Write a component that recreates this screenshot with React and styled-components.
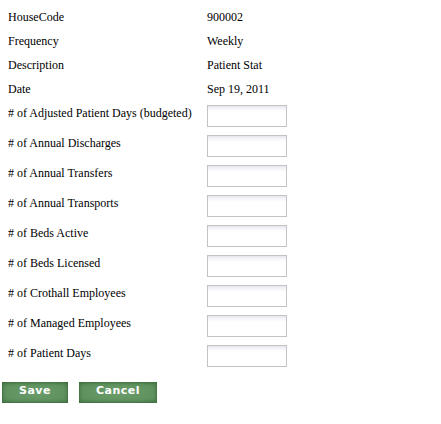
import React from "react";
import styled, { createGlobalStyle } from "styled-components";

const Global = createGlobalStyle`
  html, body { margin: 0; padding: 0; background: #ffffff; }
  body { font-family: "Liberation Serif", "Times New Roman", serif; color: #000; }
`;

const Page = styled.div`
  width: 441px;
  height: 424px;
  padding-top: 5px;
  box-sizing: border-box;
`;

const Grid = styled.div`
  display: grid;
  grid-template-columns: 199px 1fr;
  padding-left: 8px;
`;

const Cell = styled.div`
  height: ${(p) => (p.$tall ? 30 : 24)}px;
  display: flex;
  align-items: center;
  font-size: 12px;
  white-space: nowrap;
  padding-bottom: ${(p) => (p.$tall ? 5 : 0)}px;
  box-sizing: border-box;
`;

const FieldCell = styled.div`
  height: 30px;
  display: flex;
  align-items: flex-start;
  padding-top: 4px;
  box-sizing: border-box;
`;

const Input = styled.input`
  width: 80px;
  height: 22px;
  box-sizing: border-box;
  border: 1px solid #c3c3c3;
  background: linear-gradient(to bottom, #e6e6ee 0px, #f6f6fa 3px, #ffffff 6px);
  margin: 0;
  padding: 0 2px;
  outline: none;
`;

const Buttons = styled.div`
  display: flex;
  gap: 11px;
  padding-left: 2px;
  margin-top: 11px;
`;

const Button = styled.button`
  width: ${(p) => p.$w}px;
  height: 21px;
  border: none;
  margin: 0;
  padding: 0 0 3px;
  background: radial-gradient(ellipse at center, #6a9d6a 0%, #5f915f 70%, #4f7f4f 100%);
  box-shadow: inset 0 0 3px 1px #3f6d3f;
  color: #ffffff;
  font-family: "DejaVu Sans", Verdana, sans-serif;
  font-weight: bold;
  font-size: 11px;
  letter-spacing: 0.5px;
  line-height: 14px;
  cursor: pointer;
`;

const info = [
  ["HouseCode", "900002"],
  ["Frequency", "Weekly"],
  ["Description", "Patient Stat"],
  ["Date", "Sep 19, 2011"],
];

const fields = [
  "# of Adjusted Patient Days (budgeted)",
  "# of Annual Discharges",
  "# of Annual Transfers",
  "# of Annual Transports",
  "# of Beds Active",
  "# of Beds Licensed",
  "# of Crothall Employees",
  "# of Managed Employees",
  "# of Patient Days",
];

export default function App() {
  return (
    <Page>
      <Global />
      <Grid>
        {info.map(([k, v]) => (
          <React.Fragment key={k}>
            <Cell>{k}</Cell>
            <Cell>{v}</Cell>
          </React.Fragment>
        ))}
        {fields.map((f) => (
          <React.Fragment key={f}>
            <Cell $tall>{f}</Cell>
            <FieldCell>
              <Input type="text" />
            </FieldCell>
          </React.Fragment>
        ))}
      </Grid>
      <Buttons>
        <Button $w={66}>Save</Button>
        <Button $w={78}>Cancel</Button>
      </Buttons>
    </Page>
  );
}
